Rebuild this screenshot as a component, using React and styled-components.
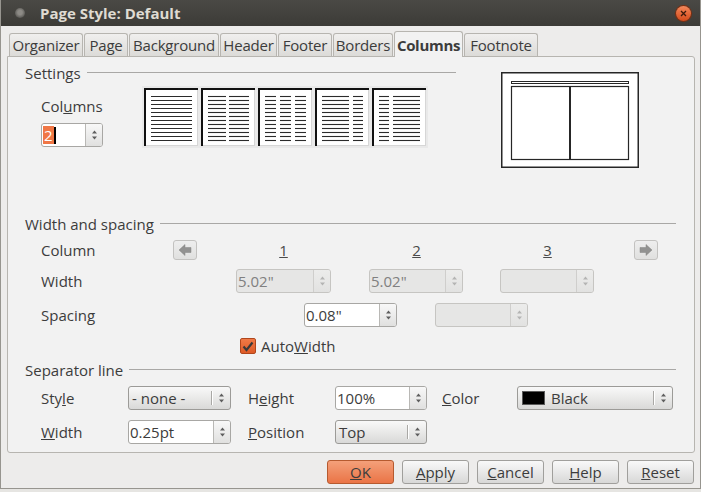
import React from 'react';
import styled, { createGlobalStyle } from 'styled-components';

const GlobalStyle = createGlobalStyle`
  html, body {
    margin: 0;
    padding: 0;
    background: #e6e5e2;
  }
  body {
    font-family: "Open Sans", "Noto Sans", sans-serif;
    font-size: 15px;
    color: #3c3c3c;
  }
  * { box-sizing: border-box; }
`;

const Dialog = styled.div`
  width: 701px;
  height: 489px;
  background: #edeceb;
  border-left: 1px solid #97958f;
  border-right: 1px solid #97958f;
  border-bottom: 1px solid #97958f;
  display: flex;
  flex-direction: column;
  overflow: hidden;
`;

const TitleBar = styled.div`
  height: 26px;
  flex: none;
  display: flex;
  align-items: center;
  padding-left: 14px;
  padding-right: 9px;
  background: linear-gradient(#4a4945, #3c3b37);
`;

const WindowDot = styled.div`
  width: 10px;
  height: 10px;
  border-radius: 50%;
  background: radial-gradient(circle at 50% 45%, #8d8b86 0 30%, #5d5c58 70%);
  margin-right: 15px;
`;

const Title = styled.div`
  flex: 1;
  font-weight: 700;
  color: #dfdbd2;
  font-size: 15px;
  line-height: 18px;
`;

const CloseButton = styled.div`
  width: 15px;
  height: 15px;
  border-radius: 50%;
  background: linear-gradient(#f4875a, #d44a1a);
  box-shadow: 0 0 0 1px #7b2e10;
  display: flex;
  align-items: center;
  justify-content: center;
`;

const TabStrip = styled.div`
  height: 30px;
  flex: none;
  display: flex;
  align-items: flex-end;
  gap: 1px;
  padding-left: 8px;
`;

const Tab = styled.div`
  width: ${p => p.$w}px;
  height: ${p => (p.$active ? 26 : 23)}px;
  margin-bottom: ${p => (p.$active ? -1 : 0)}px;
  display: flex;
  align-items: center;
  justify-content: center;
  white-space: nowrap;
  border: 1px solid #b7b5b0;
  border-bottom: none;
  border-radius: 3px 3px 0 0;
  background: ${p => (p.$active ? '#f2f2f2' : 'linear-gradient(#f0efee, #dcdbd8)')};
  font-weight: ${p => (p.$active ? 700 : 400)};
  letter-spacing: ${p => (p.$active ? -0.3 : -0.2)}px;
  position: relative;
  z-index: ${p => (p.$active ? 2 : 0)};
  line-height: 18px;
`;

const Panel = styled.div`
  margin-left: 6px;
  width: 688px;
  height: 397px;
  flex: none;
  border: 1px solid #b7b5b0;
  border-radius: 0 3px 3px 3px;
  background: #f2f2f2;
  padding: 7px 18px 0 17px;
`;

const TopRow = styled.div`
  display: flex;
`;

const Frame = styled.div`
  width: ${p => (p.$w ? `${p.$w}px` : 'auto')};
  margin-top: ${p => p.$mt || 0}px;
`;

const FrameHeader = styled.div`
  display: flex;
  align-items: center;
  height: 18px;
  line-height: 18px;
`;

const FrameRule = styled.div`
  flex: 1;
  height: 1px;
  margin-left: 6px;
  margin-top: -1px;
  background: #a9a8a6;
`;

const SettingsBody = styled.div`
  display: flex;
  padding-left: 16px;
`;

const ColumnsField = styled.div`
  width: 101px;
  display: flex;
  flex-direction: column;
  align-items: flex-start;
  padding-top: 15px;
  gap: 8px;
`;

const Label = styled.div`
  width: ${p => (p.$w ? `${p.$w}px` : 'auto')};
  padding-left: ${p => p.$pl || 0}px;
  flex: none;
  line-height: 18px;
  white-space: nowrap;
`;

const PresetStrip = styled.div`
  margin-top: 4px;
  display: flex;
  gap: 3px;
  padding: 2px 2px;
  background: #e9e9e9;
  height: 62px;
`;

const PreviewBox = styled.div`
  margin-left: 45px;
  margin-top: 8px;
  width: 138px;
  height: 96px;
`;

const Row = styled.div`
  display: flex;
  align-items: center;
  height: ${p => p.$h || 24}px;
  margin-top: ${p => p.$mt || 0}px;
  padding-left: ${p => p.$pl ?? 16}px;
`;

const Gap = styled.div`
  width: ${p => p.$w}px;
  flex: none;
`;

const ArrowButton = styled.div`
  width: 24px;
  height: 20px;
  flex: none;
  border: 1px solid #c3c2c0;
  border-radius: 3px;
  background: linear-gradient(#eeeeee, #e0e0df);
  display: flex;
  align-items: center;
  justify-content: center;
`;

const NumCell = styled.div`
  width: ${p => p.$w}px;
  flex: none;
  text-align: center;
  color: #4a4a4a;
  line-height: 18px;
  & span { text-decoration: underline; }
`;

const SpinBox = styled.div`
  display: flex;
  width: ${p => p.$w}px;
  height: 24px;
  flex: none;
  border: 1px solid ${p => (p.$disabled ? '#c6c5c2' : '#a8a7a4')};
  border-radius: 3px;
  background: ${p => (p.$disabled ? '#e6e6e5' : '#ffffff')};
  overflow: hidden;
`;

const SpinField = styled.div`
  flex: 1;
  display: flex;
  align-items: center;
  padding-left: 1px;
  color: ${p => (p.$disabled ? '#808080' : '#3c3c3c')};
  white-space: nowrap;
  overflow: hidden;
`;

const SpinButton = styled.div`
  width: 17px;
  flex: none;
  border-left: 1px solid ${p => (p.$disabled ? '#cfcecc' : '#b9b8b5')};
  background: ${p => (p.$disabled ? 'linear-gradient(#ececeb, #e2e2e1)' : 'linear-gradient(#f8f8f8, #e0e0df)')};
  display: flex;
  align-items: center;
  justify-content: center;
`;

const Selected = styled.span`
  background: #f07746;
  color: #ffffff;
  line-height: 18px;
  padding: 0 1px;
`;

const Caret = styled.span`
  display: inline-block;
  width: 2px;
  height: 17px;
  background: #000;
`;

const Check = styled.div`
  width: 16px;
  height: 16px;
  flex: none;
  border: 1px solid #b0461c;
  border-radius: 2px;
  background: linear-gradient(#ef7a47, #de5a26);
  display: flex;
  align-items: center;
  justify-content: center;
  margin-right: 5px;
`;

const SepGrid = styled.div`
  display: grid;
  grid-template-columns: 87px 103px 104px 92px 90px 156px;
  grid-auto-rows: 24px;
  row-gap: 10px;
  align-items: center;
  padding-left: 16px;
  margin-top: 7px;
`;

const Combo = styled.div`
  width: ${p => p.$w}px;
  height: 24px;
  display: flex;
  align-items: center;
  border: 1px solid #9c9b98;
  border-radius: 3px;
  background: linear-gradient(#f9f9f9, #d9d9d8);
  padding-left: ${p => p.$pl ?? 3}px;
`;

const ComboText = styled.div`
  flex: 1;
  display: flex;
  align-items: center;
  white-space: nowrap;
  line-height: 18px;
`;

const ComboDivider = styled.div`
  width: 1px;
  height: 14px;
  background: #a9a8a5;
  box-shadow: 1px 0 0 #ffffff;
`;

const ComboArrows = styled.div`
  width: 18px;
  display: flex;
  justify-content: center;
`;

const Swatch = styled.div`
  width: 23px;
  height: 14px;
  background: #000;
  border: 1px solid #5a5a5a;
  margin-right: 6px;
`;

const ButtonRow = styled.div`
  display: flex;
  justify-content: flex-end;
  gap: 8px;
  padding-right: 6px;
  margin-top: 7px;
`;

const DialogButton = styled.div`
  width: 67px;
  height: 24px;
  display: flex;
  align-items: center;
  justify-content: center;
  border: 1px solid ${p => (p.$primary ? '#b65a2f' : '#a09f9c')};
  border-radius: 3px;
  background: ${p => (p.$primary ? 'linear-gradient(#f4a07a, #ea7446)' : 'linear-gradient(#f9f9f9, #d8d8d7)')};
  line-height: 18px;
`;

const U = styled.span`
  text-decoration: underline;
`;

function SpinArrows({ disabled }) {
  const c = disabled ? '#b4b4b3' : '#5e5e5e';
  return (
    <svg width="7" height="12" viewBox="0 0 7 12">
      <path d="M3.5 1.5 L6 4.5 L1 4.5 Z M1 7.5 L6 7.5 L3.5 10.5 Z" fill={c} />
    </svg>
  );
}

function Spin({ w, value, disabled, children }) {
  return (
    <SpinBox $w={w} $disabled={disabled}>
      <SpinField $disabled={disabled}>{children || value}</SpinField>
      <SpinButton $disabled={disabled}>
        <SpinArrows disabled={disabled} />
      </SpinButton>
    </SpinBox>
  );
}

function ComboBox({ w, children, pl }) {
  return (
    <Combo $w={w} $pl={pl}>
      <ComboText>{children}</ComboText>
      <ComboDivider />
      <ComboArrows>
        <SpinArrows />
      </ComboArrows>
    </Combo>
  );
}

function Arrow({ dir }) {
  const pts = dir === 'left'
    ? '1,6 7,0.5 7,3.5 13,3.5 13,8.5 7,8.5 7,11.5'
    : '13,6 7,0.5 7,3.5 1,3.5 1,8.5 7,8.5 7,11.5';
  return (
    <svg width="14" height="12" viewBox="0 0 14 12">
      <polygon points={pts} fill="#929291" stroke="#868685" strokeWidth="0.5" />
    </svg>
  );
}

const presets = [
  [[7, 48]],
  [[7, 25], [28, 48]],
  [[7, 18], [22, 33], [37, 48]],
  [[7, 34], [38, 48]],
  [[7, 17], [21, 48]],
];

function PresetIcon({ cols }) {
  const lines = [];
  cols.forEach(([a, b], ci) => {
    for (let i = 0; i < 12; i++) {
      const y = 8.5 + i * 4;
      lines.push(<line key={`${ci}-${i}`} x1={a} x2={b} y1={y} y2={y} stroke="#2b2b2b" strokeWidth="1.1" />);
    }
  });
  return (
    <svg width="54" height="58" viewBox="0 0 54 58">
      <rect x="0" y="0" width="54" height="58" fill="#ffffff" />
      <line x1="53.5" y1="0" x2="53.5" y2="58" stroke="#d6d6d6" />
      <line x1="0" y1="57.5" x2="54" y2="57.5" stroke="#d6d6d6" />
      <line x1="0" y1="1" x2="54" y2="1" stroke="#111" strokeWidth="2" />
      <line x1="1" y1="0" x2="1" y2="58" stroke="#111" strokeWidth="2" />
      {lines}
    </svg>
  );
}

function PagePreview() {
  return (
    <svg width="138" height="96" viewBox="0 0 138 96">
      <rect x="0.75" y="0.75" width="136.5" height="94.5" fill="#ffffff" stroke="#262626" strokeWidth="1.5" />
      <rect x="10.5" y="9.5" width="117" height="2" fill="none" stroke="#262626" strokeWidth="1" />
      <rect x="10.5" y="14.5" width="117" height="73" fill="none" stroke="#262626" strokeWidth="1.2" />
      <line x1="69" y1="14.5" x2="69" y2="87.5" stroke="#262626" strokeWidth="2" />
    </svg>
  );
}

const tabs = [
  { name: 'Organizer', w: 74 },
  { name: 'Page', w: 44 },
  { name: 'Background', w: 90 },
  { name: 'Header', w: 57 },
  { name: 'Footer', w: 54 },
  { name: 'Borders', w: 60 },
  { name: 'Columns', w: 69 },
  { name: 'Footnote', w: 74 },
];

export default function App() {
  return (
    <>
      <GlobalStyle />
      <Dialog>
        <TitleBar>
          <WindowDot />
          <Title>Page Style: Default</Title>
          <CloseButton>
            <svg width="7" height="7" viewBox="0 0 7 7">
              <path d="M1 1 L6 6 M6 1 L1 6" stroke="#3b1a0c" strokeWidth="1.3" />
            </svg>
          </CloseButton>
        </TitleBar>

        <TabStrip>
          {tabs.map(t => (
            <Tab key={t.name} $w={t.w} $active={t.name === 'Columns'}>{t.name}</Tab>
          ))}
        </TabStrip>

        <Panel>
          <TopRow>
            <Frame $w={431}>
              <FrameHeader>
                Settings
                <FrameRule />
              </FrameHeader>
              <SettingsBody>
                <ColumnsField>
                  <Label>Col<U>u</U>mns</Label>
                  <Spin w={62}>
                    <Selected>2</Selected>
                    <Caret />
                  </Spin>
                </ColumnsField>
                <PresetStrip>
                  {presets.map((cols, i) => (
                    <PresetIcon key={i} cols={cols} />
                  ))}
                </PresetStrip>
              </SettingsBody>
            </Frame>
            <PreviewBox>
              <PagePreview />
            </PreviewBox>
          </TopRow>

          <Frame $mt={47}>
            <FrameHeader>
              Width and spacing
              <FrameRule />
            </FrameHeader>
            <Row $mt={5}>
              <Label $w={132}>Column</Label>
              <ArrowButton><Arrow dir="left" /></ArrowButton>
              <Gap $w={39} />
              <NumCell $w={95}><span>1</span></NumCell>
              <Gap $w={38} />
              <NumCell $w={95}><span>2</span></NumCell>
              <Gap $w={36} />
              <NumCell $w={95}><span>3</span></NumCell>
              <Gap $w={39} />
              <ArrowButton><Arrow dir="right" /></ArrowButton>
            </Row>
            <Row $mt={7}>
              <Label $w={195}>Width</Label>
              <Spin w={95} value={'5.02"'} disabled />
              <Gap $w={38} />
              <Spin w={94} value={'5.02"'} disabled />
              <Gap $w={37} />
              <Spin w={94} value="" disabled />
            </Row>
            <Row $mt={10}>
              <Label $w={263}>Spacing</Label>
              <Spin w={93} value={'0.08"'} />
              <Gap $w={38} />
              <Spin w={93} value="" disabled />
            </Row>
            <Row $mt={9} $h={20} $pl={215}>
              <Check>
                <svg width="12" height="11" viewBox="0 0 12 11">
                  <path d="M1.5 5.5 L4.5 9 L10.5 1.5" fill="none" stroke="#3a3a3a" strokeWidth="2.2" />
                </svg>
              </Check>
              <Label>Auto<U>W</U>idth</Label>
            </Row>
          </Frame>

          <Frame $mt={5}>
            <FrameHeader>
              Separator line
              <FrameRule />
            </FrameHeader>
            <SepGrid>
              <Label>Sty<U>l</U>e</Label>
              <ComboBox w={103}>- none -</ComboBox>
              <Label $pl={17}>H<U>e</U>ight</Label>
              <Spin w={92} value="100%" />
              <Label $pl={15}><U>C</U>olor</Label>
              <ComboBox w={156} pl={4}><Swatch />Black</ComboBox>

              <Label><U>W</U>idth</Label>
              <Spin w={103} value="0.25pt" />
              <Label $pl={17}><U>P</U>osition</Label>
              <ComboBox w={92}>Top</ComboBox>
            </SepGrid>
          </Frame>
        </Panel>

        <ButtonRow>
          <DialogButton $primary><U>O</U>K</DialogButton>
          <DialogButton><U>A</U>pply</DialogButton>
          <DialogButton><U>C</U>ancel</DialogButton>
          <DialogButton><U>H</U>elp</DialogButton>
          <DialogButton><U>R</U>eset</DialogButton>
        </ButtonRow>
      </Dialog>
    </>
  );
}
